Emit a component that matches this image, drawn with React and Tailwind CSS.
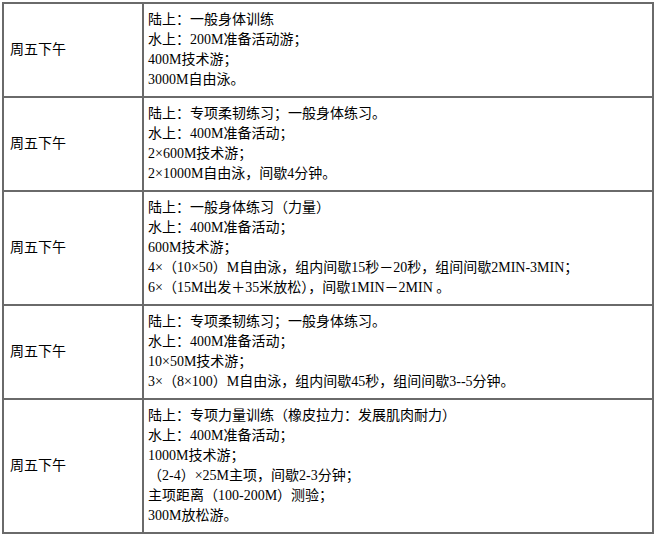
import React from 'react';

const rows = [
  ['陆上：一般身体训练', '水上：200M准备活动游；', '400M技术游；', '3000M自由泳。'],
  ['陆上：专项柔韧练习；一般身体练习。', '水上：400M准备活动；', '2×600M技术游；', '2×1000M自由泳，间歇4分钟。'],
  [
    '陆上：一般身体练习（力量）',
    '水上：400M准备活动；',
    '600M技术游；',
    '4×（10×50）M自由泳，组内间歇15秒－20秒，组间间歇2MIN-3MIN；',
    '6×（15M出发＋35米放松），间歇1MIN－2MIN 。',
  ],
  ['陆上：专项柔韧练习；一般身体练习。', '水上：400M准备活动；', '10×50M技术游；', '3×（8×100）M自由泳，组内间歇45秒，组间间歇3--5分钟。'],
  [
    '陆上：专项力量训练（橡皮拉力：发展肌肉耐力）',
    '水上：400M准备活动；',
    '1000M技术游；',
    '（2-4）×25M主项，间歇2-3分钟；',
    '主项距离（100-200M）测验；',
    '300M放松游。',
  ],
];

export default function App() {
  return (
    <div className="w-[656px] h-[536px] bg-white pt-[2px] pl-[2px]">
      <table
        className="w-[652px] border-collapse text-[14px] leading-[20px] text-black"
        style={{ fontFamily: '"Liberation Serif", "Noto Sans CJK SC", serif' }}
      >
        <tbody>
          {rows.map((lines, i) => (
            <tr key={i}>
              <td className="w-[140px] border-2 border-[#6a6a6a] px-[6px] align-middle">周五下午</td>
              <td className="border-2 border-[#6a6a6a] px-[4px] py-[6px] align-middle">
                {lines.map((l, j) => (
                  <div key={j}>{l}</div>
                ))}
              </td>
            </tr>
          ))}
        </tbody>
      </table>
    </div>
  );
}
